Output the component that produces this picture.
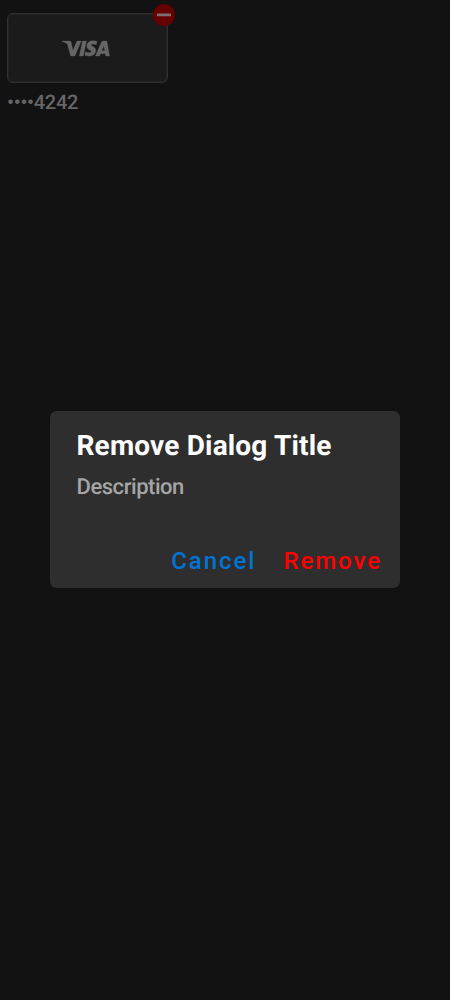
<div class="screen">
  <section class="method">
    <div class="card">
      <svg class="visa" viewBox="0 0 48 17" width="48" height="17" aria-label="Visa">
        <path d="M0 1h7.200c1 0 1.800.4 2.100 1.400L11 10.500 15.200 1h4.200L13 16H8.800L5.500 4C4.300 2.800 2.500 2 0 1.500zM20.700 1h4l-3.200 15h-4zM35.300 1.400l-.7 3.200c-2.400-1-5-.9-5 .4 0 1.500 4.500 1.700 4.500 5.500 0 5.500-6.800 6.500-11 4.700l.7-3.400c2.500 1.300 5.800 1.300 5.800-.2 0-1.800-4.500-1.700-4.500-5.700 0-4.900 6-6.400 10.200-4.500zM42 1h3.300L48 16h-3.700l-.5-2.300h-5L37.900 16h-4.100l6-13.700C40.200 1.500 40.800 1 42 1zm.3 4.600-2.100 5.100h3.100z"/>
      </svg>
      <button class="minus" aria-label="Remove card">
        <svg viewBox="0 0 22 22" width="22" height="22"><circle cx="11" cy="11" r="11"/><rect x="4" y="9.500" width="14" height="2.700" rx=".5"/></svg>
      </button>
    </div>
    <div class="number">••••4242</div>
  </section>
  <div class="overlay">
    <div class="dialog" role="dialog">
      <h1>Remove Dialog Title</h1>
      <p>Description</p>
      <div class="actions"><button class="cancel">Cancel</button><button class="remove">Remove</button></div>
    </div>
  </div>
</div>

<style>
  :global(body) { background: #121212; }
  .screen { position: relative; height: 1000px; box-sizing: border-box; padding: 13px 7px; background: #121212; font-family: Roboto, sans-serif; overflow: hidden; text-rendering: geometricPrecision; }
  .method { width: 161px; }
  .card { position: relative; height: 70px; box-sizing: border-box; border: 1px solid #303030; border-radius: 6px; background: #1b1b1b; display: flex; align-items: center; padding-left: 54px; box-shadow: inset 0 0 0 .5px #2b2b2b; }
  .visa { fill: #666; stroke: #666; stroke-width: .35; width: 47.500px; }
  button { border: 0; padding: 0; background: none; font: inherit; letter-spacing: inherit; }
  .minus { position: absolute; right: -8px; top: -10px; width: 22px; height: 22px; }
  .minus svg { display: block; }
  .minus circle { fill: #670000; }
  .minus rect { fill: #7a7070; }
  .number { margin-top: 7px; font-size: 20px; line-height: 24px; font-weight: 500; color: #666; letter-spacing: -.3px; }
  .overlay { position: absolute; inset: 0; display: grid; place-items: center; }
  .dialog { width: 350px; height: 177px; margin-bottom: 1px; box-sizing: border-box; padding: 18px 18px 12px 26.500px; background: #2e2e2e; border-radius: 6.500px; display: flex; flex-direction: column; }
  h1 { margin: 0; font-size: 28px; line-height: 34px; font-weight: 700; color: #fff; white-space: nowrap; letter-spacing: .17px; }
  p { margin: 11px 0 0; font-size: 22px; line-height: 28px; font-weight: 500; color: #a5a5a5; letter-spacing: -.45px; }
  .actions { margin-top: auto; display: flex; justify-content: flex-end; gap: 27px; font-size: 24px; line-height: 30px; font-weight: 500; letter-spacing: 1.950px; }
  .cancel { color: #0074d4; }
  .remove { color: #f00; }
</style>
